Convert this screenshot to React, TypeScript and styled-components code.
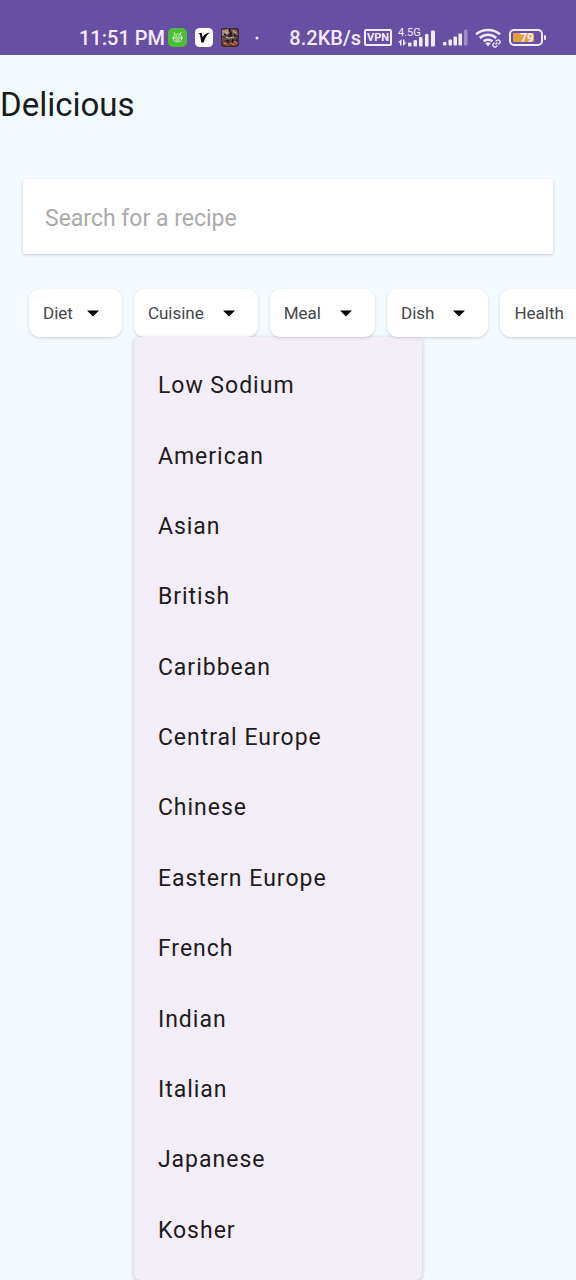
import React, { useState } from "react";
import styled, { createGlobalStyle } from "styled-components";

const GlobalStyle = createGlobalStyle`
  *, *::before, *::after { box-sizing: border-box; }
  body {
    margin: 0;
    background: #f3fbfe;
    font-family: Roboto, "Noto Sans", sans-serif;
    color: #191c1e;
  }
`;

const Page = styled.div`
  display: flex;
  flex-direction: column;
  min-height: 100vh;
  overflow: hidden;
`;

const StatusBar = styled.header`
  display: flex;
  justify-content: space-between;
  height: 55px;
  padding: 20px 30px 0 79px;
  background: #674fa3;
  color: #f4eaff;
`;

const StatusGroup = styled.div<{ $gap: number }>`
  display: flex;
  align-items: center;
  gap: ${(p) => p.$gap}px;

  svg {
    display: block;
    flex: none;
  }
`;

const StatusText = styled.span`
  font-size: 20px;
  line-height: 24px;
  font-weight: 500;
  white-space: nowrap;
`;

const VpnBadge = styled.span`
  width: 28px;
  height: 17px;
  border: 2px solid #f4eaff;
  border-radius: 2px;
  font-size: 11px;
  line-height: 13px;
  font-weight: 700;
  text-align: center;
`;

const Network = styled.span`
  display: flex;
  flex-direction: column;
  width: 38px;
`;

const NetworkLabel = styled.span`
  height: 10px;
  margin-bottom: -8px;
  font-size: 11px;
  line-height: 10px;
`;

const Battery = styled.span`
  display: flex;
  align-items: center;
  gap: 1px;

  &::after {
    content: "";
    width: 2px;
    height: 5px;
    border-radius: 1px;
    background: #f4eaff;
  }
`;

const BatteryCell = styled.span`
  width: 34px;
  height: 17px;
  padding: 2px;
  border: 2px solid #f4eaff;
  border-radius: 5px;
`;

const BatteryFill = styled.span`
  display: block;
  width: 21px;
  height: 9px;
  border-radius: 1px;
  background: #e2a03c;
  font-size: 12px;
  line-height: 10px;
  font-weight: 700;
  text-align: right;
`;

const Content = styled.main`
  display: flex;
  flex: 1;
  flex-direction: column;
`;

const Title = styled.h1`
  margin: 0;
  padding: 29px 0 0;
  font-size: 33px;
  line-height: 42px;
  font-weight: 400;
`;

const SearchForm = styled.form`
  padding: 53px 23px 35px;
`;

const SearchInput = styled.input`
  display: block;
  width: 100%;
  height: 75px;
  padding: 3px 22px 0;
  border: 0;
  border-radius: 3px;
  background: #fff;
  box-shadow: 0 1px 3px rgba(40, 60, 70, 0.25);
  color: #191c1e;
  font: 400 23px/28px Roboto, "Noto Sans", sans-serif;
  outline: none;

  &::placeholder {
    color: #aaa;
    opacity: 1;
  }
`;

const Filters = styled.div`
  display: flex;
  flex: 1;
  gap: 12px;
  padding-left: 29px;
`;

const Filter = styled.div`
  position: relative;
  flex: none;
`;

const FilterButton = styled.button<{ $gap: number }>`
  display: flex;
  align-items: center;
  gap: ${(p) => p.$gap}px;
  height: 48px;
  padding: 0 23px 0 14px;
  border: 0;
  border-radius: 11px;
  background: #fff;
  box-shadow: 0 1px 3px rgba(40, 60, 70, 0.2);
  color: #45474b;
  font: 400 17px/24px Roboto, "Noto Sans", sans-serif;
  white-space: nowrap;
  cursor: pointer;

  svg {
    display: block;
  }
`;

const Menu = styled.ul`
  position: absolute;
  top: 48px;
  bottom: 0;
  left: 0;
  display: grid;
  grid-auto-rows: 1fr;
  width: 288px;
  margin: 0;
  padding: 14px 0;
  border-radius: 6px;
  background: #f3edf7;
  box-shadow: 0 1px 4px rgba(60, 40, 90, 0.3);
  list-style: none;
`;

const MenuItem = styled.button`
  width: 100%;
  height: 100%;
  padding: 0 24px;
  border: 0;
  background: transparent;
  color: #1d1b20;
  font: 400 23px/28px Roboto, "Noto Sans", sans-serif;
  letter-spacing: 1px;
  text-align: left;
  cursor: pointer;
`;

const cuisines = [
  "Low Sodium",
  "American",
  "Asian",
  "British",
  "Caribbean",
  "Central Europe",
  "Chinese",
  "Eastern Europe",
  "French",
  "Indian",
  "Italian",
  "Japanese",
  "Kosher",
];

const filters: { label: string; gap: number; options?: string[] }[] = [
  { label: "Diet", gap: 14 },
  { label: "Cuisine", gap: 19, options: cuisines },
  { label: "Meal", gap: 19 },
  { label: "Dish", gap: 19 },
  { label: "Health", gap: 19 },
];

const Caret = () => (
  <svg width="12" height="7" viewBox="0 0 12 7" aria-hidden="true">
    <path d="M0 0.5h12L6 6.5z" fill="#000" />
  </svg>
);

const RobotIcon = () => (
  <svg width="19" height="19" viewBox="0 0 19 19" aria-hidden="true">
    <rect width="19" height="19" rx="5" fill="#4bbd36" />
    <g fill="none" stroke="#d9f6d0" strokeWidth="1" strokeLinecap="round">
      <path d="M6 4.500l1 1.700M13 4.500l-1 1.700M4.500 10h10" />
      <path d="M5.500 9c0-4 8-4 8 0v2c0 4-8 4-8 0z" />
      <path d="M7.800 8.300h.8M10.400 8.300h.8M8 12h3" />
    </g>
  </svg>
);

const CheckLogo = () => (
  <svg width="18" height="19" viewBox="0 0 18 19" aria-hidden="true">
    <rect width="18" height="19" rx="4.500" fill="#fff" />
    <path d="M3.500 5.500l3.200-.7 1 4.500C9.500 6.500 11.500 5 15 4.600c-3 2-5 5.300-6.300 9.800H6.300L5 6.800z" fill="#090909" />
  </svg>
);

const GameIcon = () => (
  <svg width="18" height="19" viewBox="0 0 18 19" aria-hidden="true">
    <rect width="18" height="19" rx="3" fill="#3a2c2b" />
    <path d="M1 2l6-1 3 3-4 3-5 1z" fill="#a98e7c" />
    <path d="M10 1l6 1 1 5-5 1z" fill="#8a6450" />
    <path d="M1 9l5-1 3 2 6-2 2 2-6 3-4-1-6 1z" fill="#5e5050" />
    <path d="M4 3l2 2M12 3l3 2M5 9l3 1 5-1" stroke="#d8bfa6" strokeWidth="1" />
    <path d="M1 13l5 1 4-1 7 1v2l-3 2-3-1-4 1-5-1z" fill="#94443a" />
    <path d="M3 15l2 1M10 15l3 2M13 13l3 2" stroke="#dc9a6c" strokeWidth="1" />
    <path d="M8 2l2 4-1 3M3 6l2 1M13 6l2 2M6 12l2 3M12 11l-1 4" stroke="#171820" fill="none" strokeWidth="1.400" />
  </svg>
);

const DataSignal = () => (
  <svg width="38" height="17" viewBox="0 0 38 17" fill="#f4eaff" aria-hidden="true">
    <path d="M2 15.500v-3H0L3.500 9v6.500zM5 9.500h1.500v3h2L5 16z" />
    <rect x="10" y="12.500" width="3.500" height="4" rx="1" />
    <rect x="15.500" y="10" width="3.500" height="6.500" rx="1" />
    <rect x="21" y="7" width="3.500" height="9.500" rx="1" />
    <rect x="27" y="4" width="3.500" height="12.500" rx="1" />
    <rect x="33" y="0.500" width="4" height="16" rx="1" />
  </svg>
);

const SimSignal = () => (
  <svg width="25" height="17" viewBox="0 0 25 17" fill="#f4eaff" aria-hidden="true">
    <rect x="0" y="13" width="3.500" height="3.500" rx="1" />
    <rect x="5.500" y="10.500" width="3.500" height="6" rx="1" />
    <rect x="10.500" y="7.500" width="3.500" height="9" rx="1" />
    <rect x="15.500" y="4.500" width="3.500" height="12" rx="1" />
    <rect x="21" y="0.500" width="3.500" height="16" rx="1" opacity="0.4" />
  </svg>
);

const WifiIcon = () => (
  <svg width="27" height="20" viewBox="0 0 27 20" fill="none" stroke="#f4eaff" aria-hidden="true">
    <path d="M1 6.300C7.500.4 18.500.4 25 6.300M4.800 10c4.700-4.200 11.700-4.200 16.400 0M8.600 13.300c2.500-2.200 6.300-2.200 8.800 0" strokeWidth="2.500" />
    <path d="M10.200 15.200c1.600-1.200 4-1.200 5.600 0L13 18.300z" fill="#f4eaff" stroke="none" />
    <g transform="rotate(-45 21.500 15.500)" strokeWidth="1.300">
      <path d="M20.800 17.500h-1.500a2 2 0 010-4h1.500M22.200 13.500h1.500a2 2 0 010 4h-1.500M20 15.500h3" />
    </g>
  </svg>
);

const DotIcon = () => (
  <svg width="4" height="4" viewBox="0 0 4 4" aria-hidden="true">
    <circle cx="2" cy="2" r="1.500" fill="#f4eaff" />
  </svg>
);

export default function App() {
  const [open, setOpen] = useState("Cuisine");

  return (
    <Page>
      <GlobalStyle />
      <StatusBar>
        <StatusGroup $gap={8}>
          <StatusGroup $gap={3}>
            <StatusText>11:51 PM</StatusText>
            <RobotIcon />
          </StatusGroup>
          <CheckLogo />
          <StatusGroup $gap={16}>
            <GameIcon />
            <DotIcon />
          </StatusGroup>
        </StatusGroup>
        <StatusGroup $gap={7}>
          <StatusGroup $gap={6}>
            <StatusGroup $gap={3}>
              <StatusText>8.2KB/s</StatusText>
              <VpnBadge>VPN</VpnBadge>
            </StatusGroup>
            <Network>
              <NetworkLabel>4.5G</NetworkLabel>
              <DataSignal />
            </Network>
          </StatusGroup>
          <SimSignal />
          <WifiIcon />
          <Battery>
            <BatteryCell>
              <BatteryFill>79</BatteryFill>
            </BatteryCell>
          </Battery>
        </StatusGroup>
      </StatusBar>
      <Content>
        <Title>Delicious</Title>
        <SearchForm role="search" onSubmit={(e) => e.preventDefault()}>
          <SearchInput type="text" aria-label="Search for a recipe" placeholder="Search for a recipe" />
        </SearchForm>
        <Filters>
          {filters.map(({ label, gap, options }) => (
            <Filter key={label}>
              <FilterButton
                type="button"
                $gap={gap}
                aria-haspopup="true"
                aria-expanded={open === label}
                onClick={() => setOpen(open === label ? "" : label)}
              >
                {label}
                <Caret />
              </FilterButton>
              {options && open === label && (
                <Menu>
                  {options.map((option) => (
                    <li key={option}>
                      <MenuItem type="button" onClick={() => setOpen("")}>
                        {option}
                      </MenuItem>
                    </li>
                  ))}
                </Menu>
              )}
            </Filter>
          ))}
        </Filters>
      </Content>
    </Page>
  );
}
